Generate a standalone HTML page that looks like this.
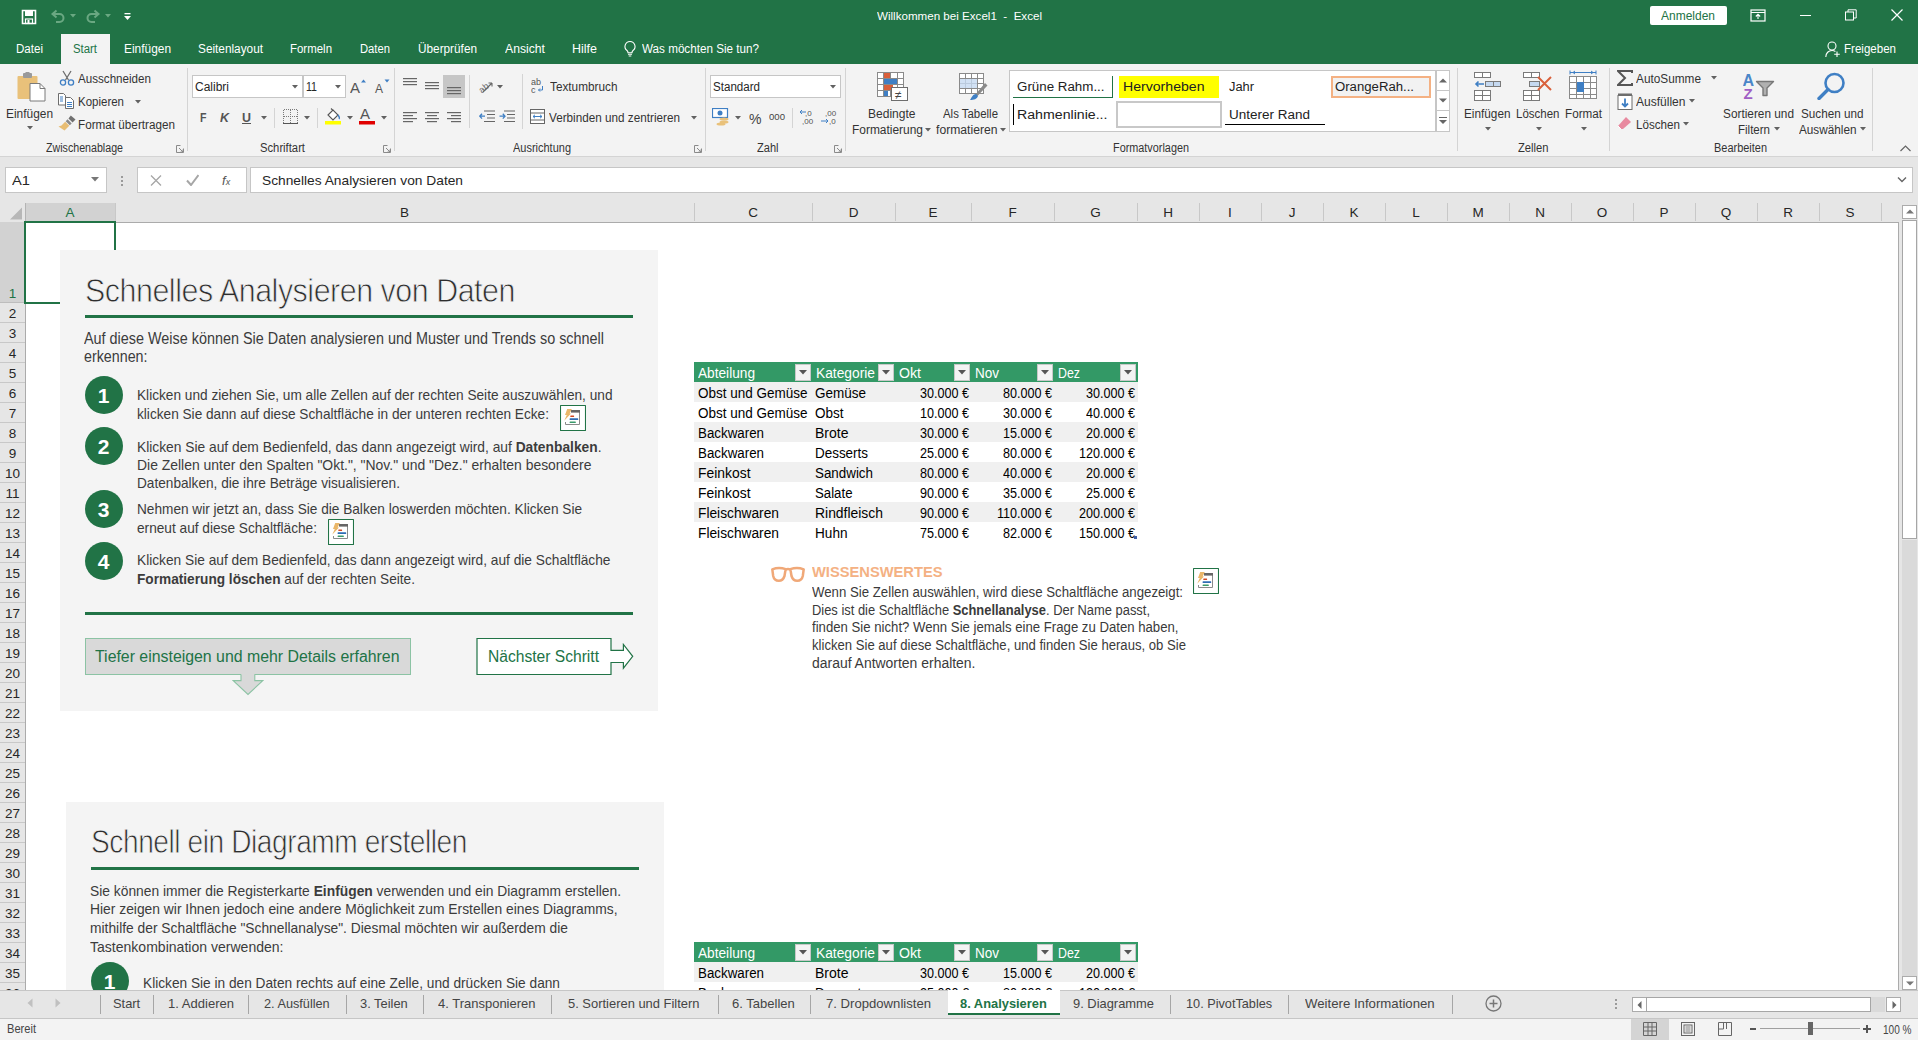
<!DOCTYPE html>
<html><head><meta charset="utf-8"><style>
html,body{margin:0;padding:0;width:1918px;height:1040px;overflow:hidden;background:#fff;font-family:"Liberation Sans", sans-serif;}
.a{position:absolute;display:block;}
.t{position:absolute;white-space:nowrap;line-height:1;transform-origin:0 0;font-family:"Liberation Sans", sans-serif;}
b{font-weight:700;}
</style></head><body>
<div class="a" style="left:0px;top:0px;width:1918px;height:64px;background:#217346;"></div><div class="a" style="left:0px;top:64px;width:1918px;height:93px;background:#f3f3f3;"></div><div class="a" style="left:0px;top:156px;width:1918px;height:1px;background:#d4d4d4;"></div><div class="a" style="left:0px;top:157px;width:1918px;height:833px;background:#e6e6e6;"></div><div class="a" style="left:61px;top:34px;width:49px;height:30px;background:#f3f3f3;"></div><div class="a" style="left:5px;top:167px;width:102px;height:26px;background:#fff;box-sizing:border-box;border:1px solid #c6c6c6;"></div><div class="a" style="left:137px;top:167px;width:110px;height:26px;background:#fff;box-sizing:border-box;border:1px solid #c6c6c6;"></div><div class="a" style="left:250px;top:167px;width:1663px;height:26px;background:#fff;box-sizing:border-box;border:1px solid #c6c6c6;"></div><div class="a" style="left:25px;top:222px;width:1874px;height:769px;background:#fff;"></div><div class="a" style="left:1898px;top:222px;width:1px;height:769px;background:#ababab;"></div><div class="a" style="left:25px;top:990px;width:1874px;height:1px;background:#ababab;"></div><div class="a" style="left:0px;top:222px;width:1899px;height:1px;background:#ababab;"></div><div class="a" style="left:25px;top:203px;width:1px;height:19px;background:#b4b4b4;"></div><div class="a" style="left:26px;top:203px;width:89px;height:18px;background:#d2d2d2;"></div><div class="a" style="left:25px;top:222px;width:1px;height:768px;background:#ababab;"></div><div class="a" style="left:0px;top:222px;width:25px;height:81px;background:#d2d2d2;"></div><svg class="a" style="left:21px;top:9px;" width="16" height="16" viewBox="0 0 16 16"><path d="M1.5 1.5h13v13h-13z" fill="none" stroke="#fff" stroke-width="1.6"/><rect x="4" y="2" width="8" height="5" fill="#fff"/><rect x="4.5" y="10" width="7" height="4.5" fill="none" stroke="#fff" stroke-width="1.2"/><rect x="6.5" y="11" width="2" height="3" fill="#fff"/></svg><svg class="a" style="left:50px;top:9px;" width="16" height="15" viewBox="0 0 16 15"><path d="M3 5h6.5a4 4 0 0 1 0 8H6" fill="none" stroke="#6aa882" stroke-width="2"/><path d="M6.5 1.5L2.5 5l4 3.5" fill="none" stroke="#6aa882" stroke-width="2"/></svg><svg class="a" style="left:70px;top:14px;" width="6" height="4" viewBox="0 0 6 4"><path d="M0 0h6L3 3.5z" fill="#6aa882"/></svg><svg class="a" style="left:85px;top:9px;" width="16" height="15" viewBox="0 0 16 15"><path d="M13 5H6.5a4 4 0 0 0 0 8H10" fill="none" stroke="#6aa882" stroke-width="2"/><path d="M9.5 1.5l4 3.5-4 3.5" fill="none" stroke="#6aa882" stroke-width="2"/></svg><svg class="a" style="left:105px;top:14px;" width="6" height="4" viewBox="0 0 6 4"><path d="M0 0h6L3 3.5z" fill="#6aa882"/></svg><svg class="a" style="left:124px;top:13px;" width="7" height="8" viewBox="0 0 7 8"><rect x="0.5" y="0" width="6" height="1.3" fill="#fff"/><path d="M0 3h7L3.5 7z" fill="#fff"/></svg><span class="t" id="t0" style="left:877px;top:10.78px;font-size:11.5px;color:#ffffff;font-weight:400;transform:scaleX(1.0085);">Willkommen bei Excel1 &nbsp;- &nbsp;Excel</span><div class="a" style="left:1650px;top:6px;width:77px;height:19px;background:#fff;border-radius:2px;"></div><span class="t" id="t1" style="left:1661px;top:10.36px;font-size:12px;color:#217346;font-weight:400;transform:scaleX(0.9991);">Anmelden</span><svg class="a" style="left:1750px;top:9px;" width="16" height="13" viewBox="0 0 16 13"><rect x="1" y="1" width="14" height="11" fill="none" stroke="#fff" stroke-width="1.2"/><path d="M1 3.5h14" stroke="#fff" stroke-width="1"/><path d="M8 10V5.5M5.8 7.5L8 5.3l2.2 2.2" fill="none" stroke="#fff" stroke-width="1.1"/></svg><div class="a" style="left:1800px;top:15px;width:11px;height:1px;background:#fff;"></div><svg class="a" style="left:1845px;top:9px;" width="12" height="12" viewBox="0 0 12 12"><rect x="0.5" y="3" width="8" height="8" fill="none" stroke="#fff"/><path d="M3 3V0.8h8.2V9H8.6" fill="none" stroke="#fff"/></svg><svg class="a" style="left:1891px;top:9px;" width="12" height="12" viewBox="0 0 12 12"><path d="M0.5 0.5l11 11M11.5 0.5l-11 11" stroke="#fff" stroke-width="1.2"/></svg><span class="t" id="t2" style="left:16px;top:43.06px;font-size:12px;color:#ffffff;font-weight:400;transform:scaleX(0.9637);">Datei</span><span class="t" id="t3" style="left:73px;top:43.06px;font-size:12px;color:#217346;font-weight:400;transform:scaleX(0.9470);">Start</span><span class="t" id="t4" style="left:124px;top:43.06px;font-size:12px;color:#ffffff;font-weight:400;transform:scaleX(0.9921);">Einfügen</span><span class="t" id="t5" style="left:198px;top:43.06px;font-size:12px;color:#ffffff;font-weight:400;transform:scaleX(0.9841);">Seitenlayout</span><span class="t" id="t6" style="left:290px;top:43.06px;font-size:12px;color:#ffffff;font-weight:400;transform:scaleX(0.9542);">Formeln</span><span class="t" id="t7" style="left:360px;top:43.06px;font-size:12px;color:#ffffff;font-weight:400;transform:scaleX(0.9366);">Daten</span><span class="t" id="t8" style="left:418px;top:43.06px;font-size:12px;color:#ffffff;font-weight:400;transform:scaleX(0.9826);">Überprüfen</span><span class="t" id="t9" style="left:505px;top:43.06px;font-size:12px;color:#ffffff;font-weight:400;transform:scaleX(1.0163);">Ansicht</span><span class="t" id="t10" style="left:572px;top:43.06px;font-size:12px;color:#ffffff;font-weight:400;transform:scaleX(1.0410);">Hilfe</span><svg class="a" style="left:623px;top:40px;" width="14" height="17" viewBox="0 0 14 17"><path d="M7 1.5a5 5 0 0 0-3 9c.7.6 1 1.3 1 2.2h4c0-.9.3-1.6 1-2.2a5 5 0 0 0-3-9z" fill="none" stroke="#fff" stroke-width="1.1"/><path d="M5 14.3h4M5.7 16h2.6" stroke="#fff" stroke-width="1.1"/></svg><span class="t" id="t11" style="left:642px;top:43.06px;font-size:12px;color:#ffffff;font-weight:400;transform:scaleX(0.9727);">Was möchten Sie tun?</span><svg class="a" style="left:1825px;top:41px;" width="16" height="17" viewBox="0 0 16 17"><circle cx="7" cy="5" r="4" fill="none" stroke="#fff" stroke-width="1.1"/><path d="M0.8 16c0-4 2.8-6.5 6.2-6.5 1.3 0 2.5.4 3.4 1" fill="none" stroke="#fff" stroke-width="1.1"/><path d="M12 10.5v5.5M9.2 13.2h5.6" stroke="#fff" stroke-width="1.1"/></svg><span class="t" id="t12" style="left:1844px;top:43.06px;font-size:12px;color:#ffffff;font-weight:400;transform:scaleX(0.9621);">Freigeben</span><svg class="a" style="left:16px;top:72px;" width="32" height="30" viewBox="0 0 32 30"><rect x="1.5" y="4" width="20" height="23" rx="1" fill="#e9c17a"/><rect x="7" y="1" width="9" height="5" rx="1" fill="#9a9a9a"/><rect x="9.5" y="0" width="4" height="2" fill="#9a9a9a"/><path d="M14 11.5h10l5 5v12.5H14z" fill="#fff" stroke="#7a7a7a" stroke-width="1"/><path d="M24 11.5v5h5" fill="none" stroke="#7a7a7a" stroke-width="1"/></svg><span class="t" id="t13" style="left:6px;top:108.36px;font-size:12px;color:#333333;font-weight:400;transform:scaleX(0.9921);">Einfügen</span><svg class="a" style="left:27px;top:126px;" width="6" height="4" viewBox="0 0 6 4"><path d="M0 0h6L3 3.5z" fill="#616161"/></svg><svg class="a" style="left:59px;top:70px;" width="16" height="16" viewBox="0 0 16 16"><path d="M4 1l5.5 9M12 1L6.5 10" stroke="#6d6d6d" stroke-width="1.3" fill="none"/><circle cx="4" cy="12.5" r="2.6" fill="none" stroke="#3f7fc4" stroke-width="1.3"/><circle cx="12" cy="12.5" r="2.6" fill="none" stroke="#3f7fc4" stroke-width="1.3"/></svg><span class="t" id="t14" style="left:78px;top:73.36px;font-size:12px;color:#333333;font-weight:400;transform:scaleX(0.9683);">Ausschneiden</span><svg class="a" style="left:58px;top:93px;" width="17" height="16" viewBox="0 0 17 16"><path d="M0.5 0.5h5l2 2v9.5h-7z" fill="#fff" stroke="#6d6d6d"/><path d="M7.5 4.5h5l3 3v8h-8z" fill="#fff" stroke="#6d6d6d"/><path d="M9 9.5h5M9 11.5h5M9 13.5h5M2 4h3M2 6h3M2 8h3" stroke="#3f7fc4" stroke-width="1"/></svg><span class="t" id="t15" style="left:78px;top:96.36px;font-size:12px;color:#333333;font-weight:400;transform:scaleX(0.9574);">Kopieren</span><svg class="a" style="left:135px;top:100px;" width="6" height="4" viewBox="0 0 6 4"><path d="M0 0h6L3 3.5z" fill="#616161"/></svg><svg class="a" style="left:58px;top:115px;" width="18" height="16" viewBox="0 0 18 16"><path d="M12.8 0.5L17.5 4.6 14.6 7.5 10.5 3.4Z" fill="#707070"/><path d="M9.6 4.3L13.7 8.4 11.8 10.3 7.7 6.2Z" fill="#8a8a8a"/><path d="M7.2 6.7L11.3 10.8 6.5 15.5 0.5 11.5 3.5 10.5Z" fill="#e8bd73"/></svg><span class="t" id="t16" style="left:78px;top:119.36px;font-size:12px;color:#333333;font-weight:400;transform:scaleX(0.9759);">Format übertragen</span><span class="t" id="t17" style="left:46px;top:141.86px;font-size:12px;color:#333333;font-weight:400;transform:scaleX(0.8879);">Zwischenablage</span><svg class="a" style="left:176px;top:145px;" width="8" height="8" viewBox="0 0 8 8"><path d="M0.5 0.5h4M0.5 0.5v7h7v-4" fill="none" stroke="#8a8a8a" stroke-width="1"/><path d="M3 3l4 4M7 4.5V7H4.5" fill="none" stroke="#8a8a8a" stroke-width="1"/></svg><div class="a" style="left:187px;top:68px;width:1px;height:83px;background:#d4d4d4;"></div><div class="a" style="left:192px;top:75px;width:111px;height:23px;background:#fff;box-sizing:border-box;border:1px solid #c6c6c6;"></div><span class="t" id="t18" style="left:195px;top:81.36px;font-size:12px;color:#262626;font-weight:400;transform:scaleX(0.9995);">Calibri</span><svg class="a" style="left:292px;top:85px;" width="6" height="4" viewBox="0 0 6 4"><path d="M0 0h6L3 3.5z" fill="#616161"/></svg><div class="a" style="left:303px;top:75px;width:43px;height:23px;background:#fff;box-sizing:border-box;border:1px solid #c6c6c6;"></div><span class="t" id="t19" style="left:306px;top:81.36px;font-size:12px;color:#262626;font-weight:400;transform:scaleX(0.8822);">11</span><svg class="a" style="left:335px;top:85px;" width="6" height="4" viewBox="0 0 6 4"><path d="M0 0h6L3 3.5z" fill="#616161"/></svg><svg class="a" style="left:350px;top:78px;" width="16" height="16" viewBox="0 0 16 16"><text x="0" y="15" font-family="Liberation Sans" font-size="15" fill="#555">A</text><path d="M11 4.5l2.5-3 2.5 3z" fill="#3f7fc4"/></svg><svg class="a" style="left:374px;top:78px;" width="16" height="16" viewBox="0 0 16 16"><text x="1" y="15" font-family="Liberation Sans" font-size="12" fill="#555">A</text><path d="M10.5 1.5h5l-2.5 3z" fill="#3f7fc4"/></svg><span class="t" id="t20" style="left:200px;top:110.52px;font-size:13px;color:#555;font-weight:700;transform:scaleX(0.8173);">F</span><span class="t" id="t21" style="left:220px;top:110.52px;font-size:13px;color:#555;font-weight:700;font-style:italic;transform:scaleX(0.9584);">K</span><span class="t" id="t22" style="left:242px;top:110.52px;font-size:13px;color:#555;font-weight:700;transform:scaleX(0.9584);">U</span><div class="a" style="left:242px;top:123px;width:9px;height:1px;background:#555;"></div><svg class="a" style="left:261px;top:116px;" width="6" height="4" viewBox="0 0 6 4"><path d="M0 0h6L3 3.5z" fill="#616161"/></svg><div class="a" style="left:274px;top:108px;width:1px;height:20px;background:#d4d4d4;"></div><svg class="a" style="left:283px;top:109px;" width="15" height="15" viewBox="0 0 15 15"><path d="M0.5 0.5h14v14M0.5 0.5v14M7.5 0.5v14M0.5 7.5h14" fill="none" stroke="#7a7a7a" stroke-width="1" stroke-dasharray="1 1" shape-rendering="crispEdges"/><path d="M0 14.5h15" stroke="#555" stroke-width="1" shape-rendering="crispEdges"/></svg><svg class="a" style="left:304px;top:116px;" width="6" height="4" viewBox="0 0 6 4"><path d="M0 0h6L3 3.5z" fill="#616161"/></svg><div class="a" style="left:317px;top:108px;width:1px;height:20px;background:#d4d4d4;"></div><svg class="a" style="left:325px;top:107px;" width="17" height="18" viewBox="0 0 17 18"><path d="M3 8l5-5 5 5-5 5z" fill="#fff" stroke="#555" stroke-width="1.1"/><path d="M6 1.5l2 2" stroke="#555" stroke-width="1.1"/><path d="M13 8c1.5 2 2 3 1 4" fill="none" stroke="#3f7fc4" stroke-width="1.3"/><rect x="0" y="14" width="16" height="3.5" fill="#ffff00"/></svg><svg class="a" style="left:347px;top:116px;" width="6" height="4" viewBox="0 0 6 4"><path d="M0 0h6L3 3.5z" fill="#616161"/></svg><svg class="a" style="left:359px;top:106px;" width="16" height="19" viewBox="0 0 16 19"><text x="1" y="13" font-family="Liberation Sans" font-size="15" fill="#555">A</text><rect x="0" y="15" width="16" height="3.5" fill="#e00000"/></svg><svg class="a" style="left:381px;top:116px;" width="6" height="4" viewBox="0 0 6 4"><path d="M0 0h6L3 3.5z" fill="#616161"/></svg><span class="t" id="t23" style="left:260px;top:141.86px;font-size:12px;color:#333333;font-weight:400;transform:scaleX(0.9372);">Schriftart</span><svg class="a" style="left:383px;top:145px;" width="8" height="8" viewBox="0 0 8 8"><path d="M0.5 0.5h4M0.5 0.5v7h7v-4" fill="none" stroke="#8a8a8a" stroke-width="1"/><path d="M3 3l4 4M7 4.5V7H4.5" fill="none" stroke="#8a8a8a" stroke-width="1"/></svg><div class="a" style="left:394px;top:68px;width:1px;height:83px;background:#d4d4d4;"></div><svg class="a" style="left:403px;top:77px;" width="14" height="16" viewBox="0 0 14 16"><rect x="0" y="1" width="14" height="1.2" fill="#666"/><rect x="0" y="4" width="14" height="1.2" fill="#666"/><rect x="0" y="7" width="14" height="1.2" fill="#666"/></svg><svg class="a" style="left:425px;top:81px;" width="14" height="16" viewBox="0 0 14 16"><rect x="0" y="1" width="14" height="1.2" fill="#666"/><rect x="0" y="4" width="14" height="1.2" fill="#666"/><rect x="0" y="7" width="14" height="1.2" fill="#666"/></svg><div class="a" style="left:443px;top:75px;width:22px;height:23px;background:#c6c6c6;"></div><svg class="a" style="left:447px;top:86px;" width="14" height="16" viewBox="0 0 14 16"><rect x="0" y="1" width="14" height="1.2" fill="#666"/><rect x="0" y="4" width="14" height="1.2" fill="#666"/><rect x="0" y="7" width="14" height="1.2" fill="#666"/></svg><div class="a" style="left:469px;top:75px;width:1px;height:53px;background:#d4d4d4;"></div><svg class="a" style="left:403px;top:111px;" width="14" height="16" viewBox="0 0 14 16"><rect x="0" y="1" width="14" height="1.2" fill="#666"/><rect x="0" y="4" width="10" height="1.2" fill="#666"/><rect x="0" y="7" width="14" height="1.2" fill="#666"/><rect x="0" y="10" width="10" height="1.2" fill="#666"/></svg><svg class="a" style="left:425px;top:111px;" width="14" height="16" viewBox="0 0 14 16"><rect x="0" y="1" width="14" height="1.2" fill="#666"/><rect x="2" y="4" width="10" height="1.2" fill="#666"/><rect x="0" y="7" width="14" height="1.2" fill="#666"/><rect x="2" y="10" width="10" height="1.2" fill="#666"/></svg><svg class="a" style="left:447px;top:111px;" width="14" height="16" viewBox="0 0 14 16"><rect x="0" y="1" width="14" height="1.2" fill="#666"/><rect x="4" y="4" width="10" height="1.2" fill="#666"/><rect x="0" y="7" width="14" height="1.2" fill="#666"/><rect x="4" y="10" width="10" height="1.2" fill="#666"/></svg><svg class="a" style="left:478px;top:78px;" width="17" height="16" viewBox="0 0 17 16"><text x="0" y="11" font-family="Liberation Sans" font-size="9" fill="#666" transform="rotate(-40 8 8)">ab</text><path d="M5 14l9-9M14 5h-3.5M14 5v3.5" fill="none" stroke="#666" stroke-width="1.1"/></svg><svg class="a" style="left:497px;top:85px;" width="6" height="4" viewBox="0 0 6 4"><path d="M0 0h6L3 3.5z" fill="#616161"/></svg><svg class="a" style="left:479px;top:110px;" width="16" height="14" viewBox="0 0 16 14"><path d="M5 1h11M8 4.5h8M8 8h8M5 11.5h11" stroke="#666" stroke-width="1.2"/><path d="M6 6.2H0.8M3 3.8L0.8 6.2 3 8.6" fill="none" stroke="#3f7fc4" stroke-width="1.3"/></svg><svg class="a" style="left:499px;top:110px;" width="16" height="14" viewBox="0 0 16 14"><path d="M5 1h11M8 4.5h8M8 8h8M5 11.5h11" stroke="#666" stroke-width="1.2"/><path d="M0.5 6.2H6M3.8 3.8L6 6.2 3.8 8.6" fill="none" stroke="#3f7fc4" stroke-width="1.3"/></svg><div class="a" style="left:522px;top:74px;width:1px;height:55px;background:#d4d4d4;"></div><svg class="a" style="left:531px;top:77px;" width="14" height="17" viewBox="0 0 14 17"><text x="0" y="8" font-family="Liberation Sans" font-size="9" fill="#555">ab</text><text x="0" y="16" font-family="Liberation Sans" font-size="9" fill="#555">c</text><path d="M11.5 9v4H7.5M9 11.5l-1.5 1.5 1.5 1.5" fill="none" stroke="#3f7fc4" stroke-width="1"/></svg><span class="t" id="t24" style="left:549.5px;top:81.36px;font-size:12px;color:#333333;font-weight:400;transform:scaleX(0.9825);">Textumbruch</span><svg class="a" style="left:530px;top:109px;" width="15" height="15" viewBox="0 0 15 15"><rect x="0.5" y="0.5" width="14" height="14" fill="#fff" stroke="#666"/><path d="M0.5 4h14M0.5 11h14" stroke="#666"/><path d="M3 7.5h9M5 5.8L3 7.5l2 1.7M10 5.8l2 1.7-2 1.7" fill="none" stroke="#3f7fc4" stroke-width="1"/></svg><span class="t" id="t25" style="left:549px;top:111.86px;font-size:12px;color:#333333;font-weight:400;transform:scaleX(0.9768);">Verbinden und zentrieren</span><svg class="a" style="left:691px;top:116px;" width="6" height="4" viewBox="0 0 6 4"><path d="M0 0h6L3 3.5z" fill="#616161"/></svg><span class="t" id="t26" style="left:513px;top:141.86px;font-size:12px;color:#333333;font-weight:400;transform:scaleX(0.9152);">Ausrichtung</span><svg class="a" style="left:694px;top:145px;" width="8" height="8" viewBox="0 0 8 8"><path d="M0.5 0.5h4M0.5 0.5v7h7v-4" fill="none" stroke="#8a8a8a" stroke-width="1"/><path d="M3 3l4 4M7 4.5V7H4.5" fill="none" stroke="#8a8a8a" stroke-width="1"/></svg><div class="a" style="left:705px;top:68px;width:1px;height:83px;background:#d4d4d4;"></div><div class="a" style="left:710px;top:75px;width:131px;height:23px;background:#fff;box-sizing:border-box;border:1px solid #c6c6c6;"></div><span class="t" id="t27" style="left:713px;top:81.36px;font-size:12px;color:#262626;font-weight:400;transform:scaleX(0.9650);">Standard</span><svg class="a" style="left:830px;top:85px;" width="6" height="4" viewBox="0 0 6 4"><path d="M0 0h6L3 3.5z" fill="#616161"/></svg><svg class="a" style="left:712px;top:108px;" width="19" height="18" viewBox="0 0 19 18"><rect x="0.5" y="0.5" width="15" height="9" fill="#fff" stroke="#3f7fc4" stroke-width="1.2"/><circle cx="8" cy="5" r="2.5" fill="#3f7fc4"/><ellipse cx="12" cy="11" rx="4.5" ry="1.6" fill="#e9c17a"/><ellipse cx="12" cy="14" rx="4.5" ry="1.6" fill="#e9c17a"/><ellipse cx="9" cy="16" rx="4.5" ry="1.6" fill="#e9c17a"/></svg><svg class="a" style="left:735px;top:116px;" width="6" height="4" viewBox="0 0 6 4"><path d="M0 0h6L3 3.5z" fill="#616161"/></svg><span class="t" id="t28" style="left:749px;top:110.83px;font-size:15px;color:#444;font-weight:400;transform:scaleX(0.9368);">%</span><span class="t" id="t29" style="left:769px;top:111.97px;font-size:9.5px;color:#444;font-weight:400;transform:scaleX(1.0089);">000</span><div class="a" style="left:792px;top:108px;width:1px;height:20px;background:#d4d4d4;"></div><svg class="a" style="left:799px;top:108px;" width="17" height="17" viewBox="0 0 17 17"><text x="6" y="7.5" font-family="Liberation Sans" font-size="8" fill="#555">,0</text><text x="3" y="16" font-family="Liberation Sans" font-size="8" fill="#555">,00</text><path d="M7 4H1M3 2L1 4l2 2" fill="none" stroke="#3f7fc4" stroke-width="1"/></svg><svg class="a" style="left:821px;top:108px;" width="17" height="17" viewBox="0 0 17 17"><text x="4" y="7.5" font-family="Liberation Sans" font-size="8" fill="#555">,00</text><text x="8" y="16" font-family="Liberation Sans" font-size="8" fill="#555">,0</text><path d="M0 13h7M5 11l2 2-2 2" fill="none" stroke="#3f7fc4" stroke-width="1"/></svg><span class="t" id="t30" style="left:756.5px;top:141.86px;font-size:12px;color:#333333;font-weight:400;transform:scaleX(0.9210);">Zahl</span><svg class="a" style="left:834px;top:145px;" width="8" height="8" viewBox="0 0 8 8"><path d="M0.5 0.5h4M0.5 0.5v7h7v-4" fill="none" stroke="#8a8a8a" stroke-width="1"/><path d="M3 3l4 4M7 4.5V7H4.5" fill="none" stroke="#8a8a8a" stroke-width="1"/></svg><div class="a" style="left:845px;top:68px;width:1px;height:83px;background:#d4d4d4;"></div><svg class="a" style="left:877px;top:72px;" width="32" height="30" viewBox="0 0 32 30"><g fill="#fff" stroke="#8a8a8a" stroke-width="1"><rect x="0.5" y="0.5" width="26" height="24"/></g><path d="M0.5 6.5h26M0.5 12.5h26M0.5 18.5h26M6.5 0.5v24M13.5 0.5v24M20.5 0.5v24" stroke="#8a8a8a"/><rect x="7" y="1" width="6" height="5" fill="#d9603b"/><rect x="7" y="7" width="13" height="5" fill="#3f7fc4"/><rect x="7" y="13" width="9" height="5" fill="#d9603b"/><rect x="7" y="19" width="4" height="5" fill="#3f7fc4"/><rect x="14.5" y="15.5" width="16" height="13" fill="#fff" stroke="#6d6d6d"/><text x="18" y="27" font-family="Liberation Sans" font-size="12" fill="#444">≠</text></svg><span class="t" id="t31" style="left:868px;top:108.36px;font-size:12px;color:#333333;font-weight:400;transform:scaleX(1.0026);">Bedingte</span><span class="t" id="t32" style="left:852px;top:124.36px;font-size:12px;color:#333333;font-weight:400;transform:scaleX(0.9947);">Formatierung</span><svg class="a" style="left:925px;top:128px;" width="6" height="4" viewBox="0 0 6 4"><path d="M0 0h6L3 3.5z" fill="#616161"/></svg><svg class="a" style="left:959px;top:73px;" width="30" height="29" viewBox="0 0 30 29"><rect x="0.5" y="0.5" width="24" height="20" fill="#fff" stroke="#8a8a8a"/><path d="M0.5 5.5h24M0.5 10.5h24M0.5 15.5h24M6.5 0.5v20M12.5 0.5v20M18.5 0.5v20" stroke="#8a8a8a"/><rect x="1" y="6" width="17" height="9" fill="#c5d9f1" opacity="0.8"/><path d="M16 22l10-12 2.5 2.5-10 10.5z" fill="#8a8a8a"/><path d="M11 27c2-3 3-6 6-6l2 2c-1 3-4 4-8 4z" fill="#3f7fc4"/></svg><span class="t" id="t33" style="left:943px;top:108.36px;font-size:12px;color:#333333;font-weight:400;transform:scaleX(0.9511);">Als Tabelle</span><span class="t" id="t34" style="left:936px;top:124.36px;font-size:12px;color:#333333;font-weight:400;transform:scaleX(1.0131);">formatieren</span><svg class="a" style="left:1000px;top:128px;" width="6" height="4" viewBox="0 0 6 4"><path d="M0 0h6L3 3.5z" fill="#616161"/></svg><div class="a" style="left:1009px;top:70px;width:427px;height:62px;background:#fff;box-sizing:border-box;border:1px solid #c6c6c6;"></div><span class="t" id="t35" style="left:1017px;top:80.86px;font-size:12px;color:#222;font-weight:400;transform:scaleX(1.1118);">Grüne Rahm...</span><div class="a" style="left:1013px;top:97px;width:100px;height:1px;background:#217346;"></div><div class="a" style="left:1112px;top:76px;width:1px;height:22px;background:#217346;"></div><div class="a" style="left:1119px;top:76px;width:100px;height:22px;background:#ffff00;"></div><span class="t" id="t36" style="left:1123px;top:80.86px;font-size:12px;color:#222;font-weight:400;transform:scaleX(1.1748);">Hervorheben</span><span class="t" id="t37" style="left:1229px;top:80.86px;font-size:12px;color:#222;font-weight:400;transform:scaleX(1.0710);">Jahr</span><div class="a" style="left:1331px;top:76px;width:100px;height:22px;background:#f2f2f2;box-sizing:border-box;border:2px solid #f4b183;"></div><span class="t" id="t38" style="left:1335px;top:80.86px;font-size:12px;color:#222;font-weight:400;transform:scaleX(1.0965);">OrangeRah...</span><div class="a" style="left:1013px;top:104px;width:1px;height:21px;background:#000;"></div><span class="t" id="t39" style="left:1017px;top:108.86px;font-size:12px;color:#222;font-weight:400;transform:scaleX(1.1796);">Rahmenlinie...</span><div class="a" style="left:1116px;top:101px;width:106px;height:27px;background:#fff;box-sizing:border-box;border:2px solid #c8c8c8;"></div><span class="t" id="t40" style="left:1229px;top:108.86px;font-size:12px;color:#222;font-weight:400;transform:scaleX(1.1243);">Unterer Rand</span><div class="a" style="left:1225px;top:124px;width:100px;height:1px;background:#000;"></div><div class="a" style="left:1436px;top:70px;width:14px;height:62px;background:#fff;box-sizing:border-box;border:1px solid #c6c6c6;"></div><div class="a" style="left:1436px;top:90px;width:14px;height:1px;background:#c6c6c6;"></div><div class="a" style="left:1436px;top:110px;width:14px;height:1px;background:#c6c6c6;"></div><svg class="a" style="left:1439px;top:78px;" width="8" height="5" viewBox="0 0 8 5"><path d="M0 4.5L4 0.5l4 4z" fill="#666"/></svg><svg class="a" style="left:1439px;top:98px;" width="8" height="5" viewBox="0 0 8 5"><path d="M0 0.5h8L4 4.5z" fill="#666"/></svg><svg class="a" style="left:1439px;top:117px;" width="8" height="8" viewBox="0 0 8 8"><rect x="0" y="0" width="8" height="1" fill="#666"/><path d="M0 3h8L4 7z" fill="#666"/></svg><span class="t" id="t41" style="left:1113px;top:141.86px;font-size:12px;color:#333333;font-weight:400;transform:scaleX(0.9043);">Formatvorlagen</span><div class="a" style="left:1457px;top:68px;width:1px;height:83px;background:#d4d4d4;"></div><svg class="a" style="left:1474px;top:72px;" width="28" height="29" viewBox="0 0 28 29"><g fill="#fff" stroke="#7a7a7a"><rect x="0.5" y="0.5" width="8" height="5"/><rect x="8.5" y="0.5" width="8" height="5"/><rect x="0.5" y="18.5" width="8" height="5"/><rect x="8.5" y="18.5" width="8" height="5"/><rect x="0.5" y="23.5" width="8" height="5"/><rect x="8.5" y="23.5" width="8" height="5"/></g><g fill="#c5d9f1" stroke="#7a7a7a"><rect x="11.5" y="9.5" width="8" height="5"/><rect x="19.5" y="9.5" width="7" height="5"/></g><path d="M10 12H2M4.5 9.5L2 12l2.5 2.5" fill="none" stroke="#3f7fc4" stroke-width="1.6"/></svg><span class="t" id="t42" style="left:1464px;top:108.36px;font-size:12px;color:#333333;font-weight:400;transform:scaleX(0.9815);">Einfügen</span><svg class="a" style="left:1485px;top:127px;" width="6" height="4" viewBox="0 0 6 4"><path d="M0 0h6L3 3.5z" fill="#616161"/></svg><svg class="a" style="left:1523px;top:72px;" width="31" height="29" viewBox="0 0 31 29"><g fill="#fff" stroke="#7a7a7a"><rect x="0.5" y="0.5" width="8" height="5"/><rect x="8.5" y="0.5" width="8" height="5"/><rect x="0.5" y="18.5" width="8" height="5"/><rect x="8.5" y="18.5" width="8" height="5"/><rect x="0.5" y="23.5" width="8" height="5"/><rect x="8.5" y="23.5" width="8" height="5"/></g><rect x="6.5" y="9.5" width="10" height="5" fill="#c5d9f1" stroke="#7a7a7a"/><path d="M15 5l13 13M28 5L15 18" stroke="#d9603b" stroke-width="2"/></svg><span class="t" id="t43" style="left:1516px;top:108.36px;font-size:12px;color:#333333;font-weight:400;transform:scaleX(0.9587);">Löschen</span><svg class="a" style="left:1536px;top:127px;" width="6" height="4" viewBox="0 0 6 4"><path d="M0 0h6L3 3.5z" fill="#616161"/></svg><svg class="a" style="left:1569px;top:70px;" width="29" height="32" viewBox="0 0 29 32"><path d="M1 2.5h26M1 0.5v4M27 0.5v4M4 2.5l2-1.5M4 2.5l2 1.5M24 2.5l-2-1.5M24 2.5l-2 1.5" fill="none" stroke="#3f7fc4" stroke-width="1"/><rect x="0.5" y="6.5" width="27" height="22" fill="#fff" stroke="#8a8a8a"/><path d="M0.5 12.5h27M0.5 18.5h27M0.5 24.5h27M7.5 6.5v22M14.5 6.5v22M21.5 6.5v22" stroke="#8a8a8a"/><rect x="8" y="12" width="7" height="10" fill="#3f7fc4"/></svg><span class="t" id="t44" style="left:1565px;top:108.36px;font-size:12px;color:#333333;font-weight:400;transform:scaleX(0.9733);">Format</span><svg class="a" style="left:1581px;top:127px;" width="6" height="4" viewBox="0 0 6 4"><path d="M0 0h6L3 3.5z" fill="#616161"/></svg><span class="t" id="t45" style="left:1518px;top:141.86px;font-size:12px;color:#333333;font-weight:400;transform:scaleX(0.9331);">Zellen</span><div class="a" style="left:1609px;top:68px;width:1px;height:83px;background:#d4d4d4;"></div><svg class="a" style="left:1617px;top:70px;" width="16" height="16" viewBox="0 0 16 16"><path d="M15 3V1H1l7 7-7 7h14v-2" fill="none" stroke="#555" stroke-width="2"/></svg><span class="t" id="t46" style="left:1636px;top:73.36px;font-size:12px;color:#333333;font-weight:400;transform:scaleX(0.9844);">AutoSumme</span><svg class="a" style="left:1711px;top:76px;" width="6" height="4" viewBox="0 0 6 4"><path d="M0 0h6L3 3.5z" fill="#616161"/></svg><svg class="a" style="left:1617px;top:93px;" width="16" height="17" viewBox="0 0 16 17"><rect x="1" y="2.5" width="14" height="14" fill="#fff" stroke="#6d6d6d"/><rect x="1" y="0.5" width="14" height="2.5" fill="#6d6d6d"/><path d="M8 5.5v8M5 10.5l3 3 3-3" fill="none" stroke="#3f7fc4" stroke-width="1.8"/></svg><span class="t" id="t47" style="left:1636px;top:96.36px;font-size:12px;color:#333333;font-weight:400;transform:scaleX(1.0025);">Ausfüllen</span><svg class="a" style="left:1689px;top:99px;" width="6" height="4" viewBox="0 0 6 4"><path d="M0 0h6L3 3.5z" fill="#616161"/></svg><svg class="a" style="left:1617px;top:116px;" width="15" height="14" viewBox="0 0 15 14"><path d="M1 10l8-9 5 5-8 7H4z" fill="#e88aa0"/><path d="M1 10l3 3" stroke="#fff" stroke-width="1"/></svg><span class="t" id="t48" style="left:1636px;top:119.36px;font-size:12px;color:#333333;font-weight:400;transform:scaleX(0.9697);">Löschen</span><svg class="a" style="left:1683px;top:122px;" width="6" height="4" viewBox="0 0 6 4"><path d="M0 0h6L3 3.5z" fill="#616161"/></svg><svg class="a" style="left:1743px;top:72px;" width="32" height="28" viewBox="0 0 32 28"><text x="-0.5" y="13.5" font-family="Liberation Sans" font-size="16" font-weight="700" fill="#4a86c8">A</text><text x="0.5" y="27" font-family="Liberation Sans" font-size="15" font-weight="700" fill="#a05ec4">Z</text><path d="M13.5 9.5h17l-6.5 6.5v7.5h-4V16z" fill="#b0b0b0" stroke="#777" stroke-width="1.4" stroke-linejoin="round"/></svg><span class="t" id="t49" style="left:1723px;top:108.36px;font-size:12px;color:#333333;font-weight:400;transform:scaleX(0.9855);">Sortieren und</span><span class="t" id="t50" style="left:1738px;top:124.36px;font-size:12px;color:#333333;font-weight:400;transform:scaleX(0.9597);">Filtern</span><svg class="a" style="left:1774px;top:127px;" width="6" height="4" viewBox="0 0 6 4"><path d="M0 0h6L3 3.5z" fill="#616161"/></svg><svg class="a" style="left:1817px;top:72px;" width="29" height="28" viewBox="0 0 29 28"><circle cx="17.5" cy="11" r="9" fill="none" stroke="#3f7fc4" stroke-width="2.6"/><path d="M11 17.5L2 26.5" stroke="#3f7fc4" stroke-width="3.4" stroke-linecap="round"/></svg><span class="t" id="t51" style="left:1801px;top:108.36px;font-size:12px;color:#333333;font-weight:400;transform:scaleX(0.9756);">Suchen und</span><span class="t" id="t52" style="left:1799px;top:124.36px;font-size:12px;color:#333333;font-weight:400;transform:scaleX(0.9792);">Auswählen</span><svg class="a" style="left:1860px;top:127px;" width="6" height="4" viewBox="0 0 6 4"><path d="M0 0h6L3 3.5z" fill="#616161"/></svg><span class="t" id="t53" style="left:1714px;top:141.86px;font-size:12px;color:#333333;font-weight:400;transform:scaleX(0.9131);">Bearbeiten</span><div class="a" style="left:1872px;top:68px;width:1px;height:83px;background:#d4d4d4;"></div><svg class="a" style="left:1900px;top:145px;" width="11" height="7" viewBox="0 0 11 7"><path d="M0.5 6L5.5 1l5 5" fill="none" stroke="#666" stroke-width="1.2"/></svg><span class="t" id="t54" style="left:12px;top:174.01px;font-size:13px;color:#262626;font-weight:400;transform:scaleX(1.1316);">A1</span><svg class="a" style="left:91px;top:177px;" width="8" height="5" viewBox="0 0 8 5"><path d="M0 0h8L4 4.5z" fill="#777"/></svg><div class="a" style="left:121px;top:176px;width:2px;height:2px;background:#9a9a9a;"></div><div class="a" style="left:121px;top:180px;width:2px;height:2px;background:#9a9a9a;"></div><div class="a" style="left:121px;top:184px;width:2px;height:2px;background:#9a9a9a;"></div><svg class="a" style="left:150px;top:175px;" width="12" height="11" viewBox="0 0 12 11"><path d="M1 0.5l10 10M11 0.5l-10 10" stroke="#a6a6a6" stroke-width="1.3"/></svg><svg class="a" style="left:186px;top:174px;" width="13" height="12" viewBox="0 0 13 12"><path d="M1 6.5l4 4.5 7.5-10" fill="none" stroke="#a6a6a6" stroke-width="2"/></svg><span class="t" id="t55" style="left:222px;top:174.01px;font-size:13px;color:#555;font-weight:400;font-family:"Liberation Serif";font-weight:700;transform:scaleX(1.4154);"><i>f</i><span style="font-size:9px;font-style:italic">x</span></span><span class="t" id="t56" style="left:262px;top:174.09px;font-size:13.5px;color:#262626;font-weight:400;transform:scaleX(1.0184);">Schnelles Analysieren von Daten</span><svg class="a" style="left:1897px;top:177px;" width="10" height="6" viewBox="0 0 10 6"><path d="M1 0.5l4 4 4-4" fill="none" stroke="#666" stroke-width="1.4"/></svg><svg class="a" style="left:10px;top:207px;" width="13" height="13" viewBox="0 0 13 13"><path d="M12 0.5V12.5H0z" fill="#b7b7b7"/></svg><span class="t" id="t57" style="left:65.4921875px;top:206.09px;font-size:13.5px;color:#217346;font-weight:400;">A</span><span class="t" id="t58" style="left:399.9921875px;top:206.09px;font-size:13.5px;color:#262626;font-weight:400;">B</span><span class="t" id="t59" style="left:748.125px;top:206.09px;font-size:13.5px;color:#262626;font-weight:400;">C</span><span class="t" id="t60" style="left:848.625px;top:206.09px;font-size:13.5px;color:#262626;font-weight:400;">D</span><span class="t" id="t61" style="left:928.4921875px;top:206.09px;font-size:13.5px;color:#262626;font-weight:400;">E</span><span class="t" id="t62" style="left:1008.375px;top:206.09px;font-size:13.5px;color:#262626;font-weight:400;">F</span><span class="t" id="t63" style="left:1090.2421875px;top:206.09px;font-size:13.5px;color:#262626;font-weight:400;">G</span><span class="t" id="t64" style="left:1163.125px;top:206.09px;font-size:13.5px;color:#262626;font-weight:400;">H</span><span class="t" id="t65" style="left:1228.1171875px;top:206.09px;font-size:13.5px;color:#262626;font-weight:400;">I</span><span class="t" id="t66" style="left:1288.625px;top:206.09px;font-size:13.5px;color:#262626;font-weight:400;">J</span><span class="t" id="t67" style="left:1349.4921875px;top:206.09px;font-size:13.5px;color:#262626;font-weight:400;">K</span><span class="t" id="t68" style="left:1412.2421875px;top:206.09px;font-size:13.5px;color:#262626;font-weight:400;">L</span><span class="t" id="t69" style="left:1472.375px;top:206.09px;font-size:13.5px;color:#262626;font-weight:400;">M</span><span class="t" id="t70" style="left:1535.125px;top:206.09px;font-size:13.5px;color:#262626;font-weight:400;">N</span><span class="t" id="t71" style="left:1596.7421875px;top:206.09px;font-size:13.5px;color:#262626;font-weight:400;">O</span><span class="t" id="t72" style="left:1659.4921875px;top:206.09px;font-size:13.5px;color:#262626;font-weight:400;">P</span><span class="t" id="t73" style="left:1720.7421875px;top:206.09px;font-size:13.5px;color:#262626;font-weight:400;">Q</span><span class="t" id="t74" style="left:1783.125px;top:206.09px;font-size:13.5px;color:#262626;font-weight:400;">R</span><span class="t" id="t75" style="left:1845.4921875px;top:206.09px;font-size:13.5px;color:#262626;font-weight:400;">S</span><div class="a" style="left:115px;top:203px;width:1px;height:18px;background:#c8c8c8;"></div><div class="a" style="left:694px;top:203px;width:1px;height:18px;background:#c8c8c8;"></div><div class="a" style="left:812px;top:203px;width:1px;height:18px;background:#c8c8c8;"></div><div class="a" style="left:895px;top:203px;width:1px;height:18px;background:#c8c8c8;"></div><div class="a" style="left:971px;top:203px;width:1px;height:18px;background:#c8c8c8;"></div><div class="a" style="left:1054px;top:203px;width:1px;height:18px;background:#c8c8c8;"></div><div class="a" style="left:1137px;top:203px;width:1px;height:18px;background:#c8c8c8;"></div><div class="a" style="left:1199px;top:203px;width:1px;height:18px;background:#c8c8c8;"></div><div class="a" style="left:1261px;top:203px;width:1px;height:18px;background:#c8c8c8;"></div><div class="a" style="left:1323px;top:203px;width:1px;height:18px;background:#c8c8c8;"></div><div class="a" style="left:1385px;top:203px;width:1px;height:18px;background:#c8c8c8;"></div><div class="a" style="left:1447px;top:203px;width:1px;height:18px;background:#c8c8c8;"></div><div class="a" style="left:1509px;top:203px;width:1px;height:18px;background:#c8c8c8;"></div><div class="a" style="left:1571px;top:203px;width:1px;height:18px;background:#c8c8c8;"></div><div class="a" style="left:1633px;top:203px;width:1px;height:18px;background:#c8c8c8;"></div><div class="a" style="left:1695px;top:203px;width:1px;height:18px;background:#c8c8c8;"></div><div class="a" style="left:1757px;top:203px;width:1px;height:18px;background:#c8c8c8;"></div><div class="a" style="left:1819px;top:203px;width:1px;height:18px;background:#c8c8c8;"></div><div class="a" style="left:1881px;top:203px;width:1px;height:18px;background:#c8c8c8;"></div><div class="a" style="left:0;top:0;width:1918px;height:990px;overflow:hidden"><span class="t" id="t76" style="left:8.7421875px;top:286.59px;font-size:13.5px;color:#217346;font-weight:400;">1</span><div class="a" style="left:0px;top:302px;width:25px;height:1px;background:#bdbdbd;"></div><span class="t" id="t77" style="left:8.7421875px;top:306.59px;font-size:13.5px;color:#262626;font-weight:400;">2</span><div class="a" style="left:0px;top:322px;width:25px;height:1px;background:#c8c8c8;"></div><span class="t" id="t78" style="left:8.7421875px;top:326.59px;font-size:13.5px;color:#262626;font-weight:400;">3</span><div class="a" style="left:0px;top:342px;width:25px;height:1px;background:#c8c8c8;"></div><span class="t" id="t79" style="left:8.7421875px;top:346.59px;font-size:13.5px;color:#262626;font-weight:400;">4</span><div class="a" style="left:0px;top:362px;width:25px;height:1px;background:#c8c8c8;"></div><span class="t" id="t80" style="left:8.7421875px;top:366.59px;font-size:13.5px;color:#262626;font-weight:400;">5</span><div class="a" style="left:0px;top:382px;width:25px;height:1px;background:#c8c8c8;"></div><span class="t" id="t81" style="left:8.7421875px;top:386.59px;font-size:13.5px;color:#262626;font-weight:400;">6</span><div class="a" style="left:0px;top:402px;width:25px;height:1px;background:#c8c8c8;"></div><span class="t" id="t82" style="left:8.7421875px;top:406.59px;font-size:13.5px;color:#262626;font-weight:400;">7</span><div class="a" style="left:0px;top:422px;width:25px;height:1px;background:#c8c8c8;"></div><span class="t" id="t83" style="left:8.7421875px;top:426.59px;font-size:13.5px;color:#262626;font-weight:400;">8</span><div class="a" style="left:0px;top:442px;width:25px;height:1px;background:#c8c8c8;"></div><span class="t" id="t84" style="left:8.7421875px;top:446.59px;font-size:13.5px;color:#262626;font-weight:400;">9</span><div class="a" style="left:0px;top:462px;width:25px;height:1px;background:#c8c8c8;"></div><span class="t" id="t85" style="left:4.984375px;top:466.59px;font-size:13.5px;color:#262626;font-weight:400;">10</span><div class="a" style="left:0px;top:482px;width:25px;height:1px;background:#c8c8c8;"></div><span class="t" id="t86" style="left:5.4921875px;top:486.59px;font-size:13.5px;color:#262626;font-weight:400;">11</span><div class="a" style="left:0px;top:502px;width:25px;height:1px;background:#c8c8c8;"></div><span class="t" id="t87" style="left:4.984375px;top:506.59px;font-size:13.5px;color:#262626;font-weight:400;">12</span><div class="a" style="left:0px;top:522px;width:25px;height:1px;background:#c8c8c8;"></div><span class="t" id="t88" style="left:4.984375px;top:526.59px;font-size:13.5px;color:#262626;font-weight:400;">13</span><div class="a" style="left:0px;top:542px;width:25px;height:1px;background:#c8c8c8;"></div><span class="t" id="t89" style="left:4.984375px;top:546.59px;font-size:13.5px;color:#262626;font-weight:400;">14</span><div class="a" style="left:0px;top:562px;width:25px;height:1px;background:#c8c8c8;"></div><span class="t" id="t90" style="left:4.984375px;top:566.59px;font-size:13.5px;color:#262626;font-weight:400;">15</span><div class="a" style="left:0px;top:582px;width:25px;height:1px;background:#c8c8c8;"></div><span class="t" id="t91" style="left:4.984375px;top:586.59px;font-size:13.5px;color:#262626;font-weight:400;">16</span><div class="a" style="left:0px;top:602px;width:25px;height:1px;background:#c8c8c8;"></div><span class="t" id="t92" style="left:4.984375px;top:606.59px;font-size:13.5px;color:#262626;font-weight:400;">17</span><div class="a" style="left:0px;top:622px;width:25px;height:1px;background:#c8c8c8;"></div><span class="t" id="t93" style="left:4.984375px;top:626.59px;font-size:13.5px;color:#262626;font-weight:400;">18</span><div class="a" style="left:0px;top:642px;width:25px;height:1px;background:#c8c8c8;"></div><span class="t" id="t94" style="left:4.984375px;top:646.59px;font-size:13.5px;color:#262626;font-weight:400;">19</span><div class="a" style="left:0px;top:662px;width:25px;height:1px;background:#c8c8c8;"></div><span class="t" id="t95" style="left:4.984375px;top:666.59px;font-size:13.5px;color:#262626;font-weight:400;">20</span><div class="a" style="left:0px;top:682px;width:25px;height:1px;background:#c8c8c8;"></div><span class="t" id="t96" style="left:4.984375px;top:686.59px;font-size:13.5px;color:#262626;font-weight:400;">21</span><div class="a" style="left:0px;top:702px;width:25px;height:1px;background:#c8c8c8;"></div><span class="t" id="t97" style="left:4.984375px;top:706.59px;font-size:13.5px;color:#262626;font-weight:400;">22</span><div class="a" style="left:0px;top:722px;width:25px;height:1px;background:#c8c8c8;"></div><span class="t" id="t98" style="left:4.984375px;top:726.59px;font-size:13.5px;color:#262626;font-weight:400;">23</span><div class="a" style="left:0px;top:742px;width:25px;height:1px;background:#c8c8c8;"></div><span class="t" id="t99" style="left:4.984375px;top:746.59px;font-size:13.5px;color:#262626;font-weight:400;">24</span><div class="a" style="left:0px;top:762px;width:25px;height:1px;background:#c8c8c8;"></div><span class="t" id="t100" style="left:4.984375px;top:766.59px;font-size:13.5px;color:#262626;font-weight:400;">25</span><div class="a" style="left:0px;top:782px;width:25px;height:1px;background:#c8c8c8;"></div><span class="t" id="t101" style="left:4.984375px;top:786.59px;font-size:13.5px;color:#262626;font-weight:400;">26</span><div class="a" style="left:0px;top:802px;width:25px;height:1px;background:#c8c8c8;"></div><span class="t" id="t102" style="left:4.984375px;top:806.59px;font-size:13.5px;color:#262626;font-weight:400;">27</span><div class="a" style="left:0px;top:822px;width:25px;height:1px;background:#c8c8c8;"></div><span class="t" id="t103" style="left:4.984375px;top:826.59px;font-size:13.5px;color:#262626;font-weight:400;">28</span><div class="a" style="left:0px;top:842px;width:25px;height:1px;background:#c8c8c8;"></div><span class="t" id="t104" style="left:4.984375px;top:846.59px;font-size:13.5px;color:#262626;font-weight:400;">29</span><div class="a" style="left:0px;top:862px;width:25px;height:1px;background:#c8c8c8;"></div><span class="t" id="t105" style="left:4.984375px;top:866.59px;font-size:13.5px;color:#262626;font-weight:400;">30</span><div class="a" style="left:0px;top:882px;width:25px;height:1px;background:#c8c8c8;"></div><span class="t" id="t106" style="left:4.984375px;top:886.59px;font-size:13.5px;color:#262626;font-weight:400;">31</span><div class="a" style="left:0px;top:902px;width:25px;height:1px;background:#c8c8c8;"></div><span class="t" id="t107" style="left:4.984375px;top:906.59px;font-size:13.5px;color:#262626;font-weight:400;">32</span><div class="a" style="left:0px;top:922px;width:25px;height:1px;background:#c8c8c8;"></div><span class="t" id="t108" style="left:4.984375px;top:926.59px;font-size:13.5px;color:#262626;font-weight:400;">33</span><div class="a" style="left:0px;top:942px;width:25px;height:1px;background:#c8c8c8;"></div><span class="t" id="t109" style="left:4.984375px;top:946.59px;font-size:13.5px;color:#262626;font-weight:400;">34</span><div class="a" style="left:0px;top:962px;width:25px;height:1px;background:#c8c8c8;"></div><span class="t" id="t110" style="left:4.984375px;top:966.59px;font-size:13.5px;color:#262626;font-weight:400;">35</span><div class="a" style="left:0px;top:982px;width:25px;height:1px;background:#c8c8c8;"></div><span class="t" id="t111" style="left:4.984375px;top:986.59px;font-size:13.5px;color:#262626;font-weight:400;">36</span><div class="a" style="left:0px;top:1002px;width:25px;height:1px;background:#c8c8c8;"></div><div class="a" style="left:24px;top:221px;width:92px;height:2px;background:#217346;"></div><div class="a" style="left:24px;top:221px;width:2px;height:83px;background:#217346;"></div><div class="a" style="left:24px;top:302px;width:40px;height:2px;background:#217346;"></div><div class="a" style="left:114px;top:221px;width:2px;height:32px;background:#217346;"></div><div class="a" style="left:1899px;top:203px;width:19px;height:787px;background:#e6e6e6;"></div><div class="a" style="left:1902px;top:205px;width:15px;height:14px;background:#fff;box-sizing:border-box;border:1px solid #ababab;"></div><svg class="a" style="left:1906px;top:209px;" width="8" height="5" viewBox="0 0 8 5"><path d="M0 4.5L4 0.5l4 4z" fill="#777"/></svg><div class="a" style="left:1902px;top:220px;width:15px;height:319px;background:#fff;box-sizing:border-box;border:1.5px solid #a6a6a6;"></div><div class="a" style="left:1902px;top:540px;width:15px;height:436px;background:#dadada;"></div><div class="a" style="left:1902px;top:976px;width:15px;height:14px;background:#fff;box-sizing:border-box;border:1px solid #ababab;"></div><svg class="a" style="left:1906px;top:981px;" width="8" height="5" viewBox="0 0 8 5"><path d="M0 0.5h8L4 4.5z" fill="#777"/></svg><div class="a" style="left:60px;top:250px;width:598px;height:461px;background:#f4f4f4;"></div><span class="t" id="t112" style="left:85px;top:274.12px;font-size:33px;color:#2e2e2e;font-weight:400;letter-spacing:-0.5px;-webkit-text-stroke:0.8px #f4f4f4;transform:scaleX(0.9208);">Schnelles Analysieren von Daten</span><div class="a" style="left:85px;top:315px;width:548px;height:3px;background:#217346;"></div><span class="t" id="t113" style="left:84px;top:330.98px;font-size:16px;color:#3c3c3c;font-weight:400;transform:scaleX(0.8999);">Auf diese Weise können Sie Daten analysieren und Muster und Trends so schnell</span><span class="t" id="t114" style="left:84px;top:349.48px;font-size:16px;color:#3c3c3c;font-weight:400;transform:scaleX(0.8922);">erkennen:</span><svg class="a" style="left:84.5px;top:375.5px;" width="38" height="38" viewBox="0 0 38 38"><circle cx="19" cy="19" r="19" fill="#217346"/></svg><span class="t" id="t115" style="left:97.65625px;top:384.75px;font-size:21px;color:#fff;font-weight:700;">1</span><span class="t" id="t116" style="left:137px;top:387.75px;font-size:14.5px;color:#3c3c3c;font-weight:400;transform:scaleX(0.9423);">Klicken und ziehen Sie, um alle Zellen auf der rechten Seite auszuwählen, und</span><span class="t" id="t117" style="left:137px;top:406.75px;font-size:14.5px;color:#3c3c3c;font-weight:400;transform:scaleX(0.9413);">klicken Sie dann auf diese Schaltfläche in der unteren rechten Ecke:</span><svg class="a" style="left:560px;top:405px;" width="26" height="26" viewBox="0 0 26 26"><rect x="0.5" y="0.5" width="25" height="25" rx="0.5" fill="#fff" stroke="#217346" stroke-width="1.1"/><path d="M19.5 7V19.5H5.5V17" fill="none" stroke="#8a8a8a" stroke-width="1"/><rect x="11" y="5" width="9" height="2.6" fill="#666"/><path d="M7.2 4H11.8L9.6 8.6H11L4.2 15.8L6.8 10H5Z" fill="#eab76a"/><rect x="10.3" y="10.5" width="3.8" height="1.6" rx="0.5" fill="#d24a24"/><rect x="9.6" y="13.3" width="8.6" height="1.6" rx="0.5" fill="#2f6db5"/><rect x="9.6" y="16.4" width="6.2" height="1.5" rx="0.5" fill="#3a9a6a"/></svg><svg class="a" style="left:84.5px;top:426.5px;" width="38" height="38" viewBox="0 0 38 38"><circle cx="19" cy="19" r="19" fill="#217346"/></svg><span class="t" id="t118" style="left:97.65625px;top:435.75px;font-size:21px;color:#fff;font-weight:700;">2</span><span class="t" id="t119" style="left:137px;top:439.75px;font-size:14.5px;color:#3c3c3c;font-weight:400;transform:scaleX(0.9509);">Klicken Sie auf dem Bedienfeld, das dann angezeigt wird, auf <b>Datenbalken</b>.</span><span class="t" id="t120" style="left:137px;top:458.25px;font-size:14.5px;color:#3c3c3c;font-weight:400;transform:scaleX(0.9606);">Die Zellen unter den Spalten "Okt.", "Nov." und "Dez." erhalten besondere</span><span class="t" id="t121" style="left:137px;top:476.25px;font-size:14.5px;color:#3c3c3c;font-weight:400;transform:scaleX(0.9403);">Datenbalken, die ihre Beträge visualisieren.</span><svg class="a" style="left:84.5px;top:490px;" width="38" height="38" viewBox="0 0 38 38"><circle cx="19" cy="19" r="19" fill="#217346"/></svg><span class="t" id="t122" style="left:97.65625px;top:499.25px;font-size:21px;color:#fff;font-weight:700;">3</span><span class="t" id="t123" style="left:137px;top:502.25px;font-size:14.5px;color:#3c3c3c;font-weight:400;transform:scaleX(0.9406);">Nehmen wir jetzt an, dass Sie die Balken loswerden möchten. Klicken Sie</span><span class="t" id="t124" style="left:137px;top:521.25px;font-size:14.5px;color:#3c3c3c;font-weight:400;transform:scaleX(0.9422);">erneut auf diese Schaltfläche:</span><svg class="a" style="left:328px;top:519px;" width="26" height="26" viewBox="0 0 26 26"><rect x="0.5" y="0.5" width="25" height="25" rx="0.5" fill="#fff" stroke="#217346" stroke-width="1.1"/><path d="M19.5 7V19.5H5.5V17" fill="none" stroke="#8a8a8a" stroke-width="1"/><rect x="11" y="5" width="9" height="2.6" fill="#666"/><path d="M7.2 4H11.8L9.6 8.6H11L4.2 15.8L6.8 10H5Z" fill="#eab76a"/><rect x="10.3" y="10.5" width="3.8" height="1.6" rx="0.5" fill="#d24a24"/><rect x="9.6" y="13.3" width="8.6" height="1.6" rx="0.5" fill="#2f6db5"/><rect x="9.6" y="16.4" width="6.2" height="1.5" rx="0.5" fill="#3a9a6a"/></svg><svg class="a" style="left:84.5px;top:541.5px;" width="38" height="38" viewBox="0 0 38 38"><circle cx="19" cy="19" r="19" fill="#217346"/></svg><span class="t" id="t125" style="left:97.65625px;top:550.75px;font-size:21px;color:#fff;font-weight:700;">4</span><span class="t" id="t126" style="left:137px;top:553.25px;font-size:14.5px;color:#3c3c3c;font-weight:400;transform:scaleX(0.9459);">Klicken Sie auf dem Bedienfeld, das dann angezeigt wird, auf die Schaltfläche</span><span class="t" id="t127" style="left:137px;top:572.25px;font-size:14.5px;color:#3c3c3c;font-weight:400;transform:scaleX(0.9425);"><b>Formatierung löschen</b> auf der rechten Seite.</span><div class="a" style="left:85px;top:612px;width:548px;height:3px;background:#217346;"></div><div class="a" style="left:85px;top:638px;width:326px;height:37px;background:#d9d9d9;box-sizing:border-box;border:1px solid #8cc3a4;"></div><svg class="a" style="left:232px;top:673px;" width="32" height="23" viewBox="0 0 32 23"><path d="M9 1V7.6H1.3L16 21.4L30.7 7.6H22.8V1" fill="#d9d9d9" stroke="#8cc3a4" stroke-width="1.1"/><rect x="9.6" y="0" width="12.6" height="2" fill="#d9d9d9"/></svg><span class="t" id="t128" style="left:95px;top:649.48px;font-size:16px;color:#217346;font-weight:400;transform:scaleX(0.9915);">Tiefer einsteigen und mehr Details erfahren</span><svg class="a" style="left:476px;top:637px;" width="159" height="39" viewBox="0 0 159 39"><path d="M1 1.5H135V13.4H147.4V7.4L156.7 19.3L147.4 31.2V25.5H135V37.5H1Z" fill="#fff" stroke="#217346" stroke-width="1.2"/></svg><span class="t" id="t129" style="left:488px;top:649.48px;font-size:16px;color:#217346;font-weight:400;transform:scaleX(0.9753);">Nächster Schritt</span><div class="a" style="left:66px;top:802px;width:598px;height:188px;background:#f4f4f4;"></div><span class="t" id="t130" style="left:91px;top:824.62px;font-size:33px;color:#2e2e2e;font-weight:400;letter-spacing:-0.5px;-webkit-text-stroke:0.8px #f4f4f4;transform:scaleX(0.8513);">Schnell ein Diagramm erstellen</span><div class="a" style="left:91px;top:867px;width:548px;height:3px;background:#217346;"></div><span class="t" id="t131" style="left:90px;top:883.75px;font-size:14.5px;color:#3c3c3c;font-weight:400;transform:scaleX(0.9535);">Sie können immer die Registerkarte <b>Einfügen</b> verwenden und ein Diagramm erstellen.</span><span class="t" id="t132" style="left:90px;top:902.25px;font-size:14.5px;color:#3c3c3c;font-weight:400;transform:scaleX(0.9541);">Hier zeigen wir Ihnen jedoch eine andere Möglichkeit zum Erstellen eines Diagramms,</span><span class="t" id="t133" style="left:90px;top:920.75px;font-size:14.5px;color:#3c3c3c;font-weight:400;transform:scaleX(0.9523);">mithilfe der Schaltfläche "Schnellanalyse". Diesmal möchten wir außerdem die</span><span class="t" id="t134" style="left:90px;top:939.75px;font-size:14.5px;color:#3c3c3c;font-weight:400;transform:scaleX(0.9680);">Tastenkombination verwenden:</span><svg class="a" style="left:90.5px;top:962px;" width="38" height="38" viewBox="0 0 38 38"><circle cx="19" cy="19" r="19" fill="#217346"/></svg><span class="t" id="t135" style="left:103.65625px;top:971.25px;font-size:21px;color:#fff;font-weight:700;">1</span><span class="t" id="t136" style="left:143px;top:975.75px;font-size:14.5px;color:#3c3c3c;font-weight:400;transform:scaleX(0.9440);">Klicken Sie in den Daten rechts auf eine Zelle, und drücken Sie dann</span><div class="a" style="left:694px;top:362px;width:444px;height:20px;background:#339966;"></div><span class="t" id="t137" style="left:697.5px;top:365.67px;font-size:14px;color:#fff;font-weight:400;transform:scaleX(0.9762);">Abteilung</span><div class="a" style="left:795px;top:364px;width:16px;height:17px;background:#f3f3f3;box-sizing:border-box;border:1px solid #c8c8c8;"></div><svg class="a" style="left:799px;top:370px;" width="8" height="5" viewBox="0 0 8 5"><path d="M0 0h8L4 4.5z" fill="#555"/></svg><span class="t" id="t138" style="left:815.5px;top:365.67px;font-size:14px;color:#fff;font-weight:400;transform:scaleX(0.9844);">Kategorie</span><div class="a" style="left:878px;top:364px;width:16px;height:17px;background:#f3f3f3;box-sizing:border-box;border:1px solid #c8c8c8;"></div><svg class="a" style="left:882px;top:370px;" width="8" height="5" viewBox="0 0 8 5"><path d="M0 0h8L4 4.5z" fill="#555"/></svg><span class="t" id="t139" style="left:898.5px;top:365.67px;font-size:14px;color:#fff;font-weight:400;transform:scaleX(1.0100);">Okt</span><div class="a" style="left:954px;top:364px;width:16px;height:17px;background:#f3f3f3;box-sizing:border-box;border:1px solid #c8c8c8;"></div><svg class="a" style="left:958px;top:370px;" width="8" height="5" viewBox="0 0 8 5"><path d="M0 0h8L4 4.5z" fill="#555"/></svg><span class="t" id="t140" style="left:974.5px;top:365.67px;font-size:14px;color:#fff;font-weight:400;transform:scaleX(0.9636);">Nov</span><div class="a" style="left:1037px;top:364px;width:16px;height:17px;background:#f3f3f3;box-sizing:border-box;border:1px solid #c8c8c8;"></div><svg class="a" style="left:1041px;top:370px;" width="8" height="5" viewBox="0 0 8 5"><path d="M0 0h8L4 4.5z" fill="#555"/></svg><span class="t" id="t141" style="left:1057.5px;top:365.67px;font-size:14px;color:#fff;font-weight:400;transform:scaleX(0.8833);">Dez</span><div class="a" style="left:1120px;top:364px;width:16px;height:17px;background:#f3f3f3;box-sizing:border-box;border:1px solid #c8c8c8;"></div><svg class="a" style="left:1124px;top:370px;" width="8" height="5" viewBox="0 0 8 5"><path d="M0 0h8L4 4.5z" fill="#555"/></svg><div class="a" style="left:694px;top:382px;width:444px;height:20px;background:#f0f0f0;"></div><span class="t" id="t142" style="left:697.5px;top:386.17px;font-size:14px;color:#000;font-weight:400;transform:scaleX(0.9637);">Obst und Gemüse</span><span class="t" id="t143" style="left:815px;top:386.17px;font-size:14px;color:#000;font-weight:400;transform:scaleX(0.9637);">Gemüse</span><span class="t" id="t144" style="left:919.95px;top:386.17px;font-size:14px;color:#000;font-weight:400;transform:scaleX(0.9000);">30.000 €</span><span class="t" id="t145" style="left:1002.95px;top:386.17px;font-size:14px;color:#000;font-weight:400;transform:scaleX(0.9000);">80.000 €</span><span class="t" id="t146" style="left:1085.95px;top:386.17px;font-size:14px;color:#000;font-weight:400;transform:scaleX(0.9000);">30.000 €</span><span class="t" id="t147" style="left:697.5px;top:406.17px;font-size:14px;color:#000;font-weight:400;transform:scaleX(0.9637);">Obst und Gemüse</span><span class="t" id="t148" style="left:815px;top:406.17px;font-size:14px;color:#000;font-weight:400;transform:scaleX(0.9635);">Obst</span><span class="t" id="t149" style="left:919.95px;top:406.17px;font-size:14px;color:#000;font-weight:400;transform:scaleX(0.9000);">10.000 €</span><span class="t" id="t150" style="left:1002.95px;top:406.17px;font-size:14px;color:#000;font-weight:400;transform:scaleX(0.9000);">30.000 €</span><span class="t" id="t151" style="left:1085.95px;top:406.17px;font-size:14px;color:#000;font-weight:400;transform:scaleX(0.9000);">40.000 €</span><div class="a" style="left:694px;top:422px;width:444px;height:20px;background:#f0f0f0;"></div><span class="t" id="t152" style="left:697.5px;top:426.17px;font-size:14px;color:#000;font-weight:400;transform:scaleX(0.9529);">Backwaren</span><span class="t" id="t153" style="left:815px;top:426.17px;font-size:14px;color:#000;font-weight:400;transform:scaleX(1.0009);">Brote</span><span class="t" id="t154" style="left:919.95px;top:426.17px;font-size:14px;color:#000;font-weight:400;transform:scaleX(0.9000);">30.000 €</span><span class="t" id="t155" style="left:1002.95px;top:426.17px;font-size:14px;color:#000;font-weight:400;transform:scaleX(0.9000);">15.000 €</span><span class="t" id="t156" style="left:1085.95px;top:426.17px;font-size:14px;color:#000;font-weight:400;transform:scaleX(0.9000);">20.000 €</span><span class="t" id="t157" style="left:697.5px;top:446.17px;font-size:14px;color:#000;font-weight:400;transform:scaleX(0.9529);">Backwaren</span><span class="t" id="t158" style="left:815px;top:446.17px;font-size:14px;color:#000;font-weight:400;transform:scaleX(0.9595);">Desserts</span><span class="t" id="t159" style="left:919.95px;top:446.17px;font-size:14px;color:#000;font-weight:400;transform:scaleX(0.9000);">25.000 €</span><span class="t" id="t160" style="left:1002.95px;top:446.17px;font-size:14px;color:#000;font-weight:400;transform:scaleX(0.9000);">80.000 €</span><span class="t" id="t161" style="left:1078.9328125px;top:446.17px;font-size:14px;color:#000;font-weight:400;transform:scaleX(0.9000);">120.000 €</span><div class="a" style="left:694px;top:462px;width:444px;height:20px;background:#f0f0f0;"></div><span class="t" id="t162" style="left:697.5px;top:466.17px;font-size:14px;color:#000;font-weight:400;transform:scaleX(0.9920);">Feinkost</span><span class="t" id="t163" style="left:815px;top:466.17px;font-size:14px;color:#000;font-weight:400;transform:scaleX(0.9555);">Sandwich</span><span class="t" id="t164" style="left:919.95px;top:466.17px;font-size:14px;color:#000;font-weight:400;transform:scaleX(0.9000);">80.000 €</span><span class="t" id="t165" style="left:1002.95px;top:466.17px;font-size:14px;color:#000;font-weight:400;transform:scaleX(0.9000);">40.000 €</span><span class="t" id="t166" style="left:1085.95px;top:466.17px;font-size:14px;color:#000;font-weight:400;transform:scaleX(0.9000);">20.000 €</span><span class="t" id="t167" style="left:697.5px;top:486.17px;font-size:14px;color:#000;font-weight:400;transform:scaleX(0.9920);">Feinkost</span><span class="t" id="t168" style="left:815px;top:486.17px;font-size:14px;color:#000;font-weight:400;transform:scaleX(0.9445);">Salate</span><span class="t" id="t169" style="left:919.95px;top:486.17px;font-size:14px;color:#000;font-weight:400;transform:scaleX(0.9000);">90.000 €</span><span class="t" id="t170" style="left:1002.95px;top:486.17px;font-size:14px;color:#000;font-weight:400;transform:scaleX(0.9000);">35.000 €</span><span class="t" id="t171" style="left:1085.95px;top:486.17px;font-size:14px;color:#000;font-weight:400;transform:scaleX(0.9000);">25.000 €</span><div class="a" style="left:694px;top:502px;width:444px;height:20px;background:#f0f0f0;"></div><span class="t" id="t172" style="left:697.5px;top:506.17px;font-size:14px;color:#000;font-weight:400;transform:scaleX(0.9820);">Fleischwaren</span><span class="t" id="t173" style="left:815px;top:506.17px;font-size:14px;color:#000;font-weight:400;transform:scaleX(0.9929);">Rindfleisch</span><span class="t" id="t174" style="left:919.95px;top:506.17px;font-size:14px;color:#000;font-weight:400;transform:scaleX(0.9000);">90.000 €</span><span class="t" id="t175" style="left:996.875px;top:506.17px;font-size:14px;color:#000;font-weight:400;transform:scaleX(0.9000);">110.000 €</span><span class="t" id="t176" style="left:1078.9328125px;top:506.17px;font-size:14px;color:#000;font-weight:400;transform:scaleX(0.9000);">200.000 €</span><span class="t" id="t177" style="left:697.5px;top:526.17px;font-size:14px;color:#000;font-weight:400;transform:scaleX(0.9820);">Fleischwaren</span><span class="t" id="t178" style="left:815px;top:526.17px;font-size:14px;color:#000;font-weight:400;transform:scaleX(0.9711);">Huhn</span><span class="t" id="t179" style="left:919.95px;top:526.17px;font-size:14px;color:#000;font-weight:400;transform:scaleX(0.9000);">75.000 €</span><span class="t" id="t180" style="left:1002.95px;top:526.17px;font-size:14px;color:#000;font-weight:400;transform:scaleX(0.9000);">82.000 €</span><span class="t" id="t181" style="left:1078.9328125px;top:526.17px;font-size:14px;color:#000;font-weight:400;transform:scaleX(0.9000);">150.000 €</span><div class="a" style="left:1134px;top:536px;width:3px;height:3px;background:#3f5fa8;"></div><div class="a" style="left:694px;top:942px;width:444px;height:20px;background:#339966;"></div><span class="t" id="t182" style="left:697.5px;top:945.67px;font-size:14px;color:#fff;font-weight:400;transform:scaleX(0.9762);">Abteilung</span><div class="a" style="left:795px;top:944px;width:16px;height:17px;background:#f3f3f3;box-sizing:border-box;border:1px solid #c8c8c8;"></div><svg class="a" style="left:799px;top:950px;" width="8" height="5" viewBox="0 0 8 5"><path d="M0 0h8L4 4.5z" fill="#555"/></svg><span class="t" id="t183" style="left:815.5px;top:945.67px;font-size:14px;color:#fff;font-weight:400;transform:scaleX(0.9844);">Kategorie</span><div class="a" style="left:878px;top:944px;width:16px;height:17px;background:#f3f3f3;box-sizing:border-box;border:1px solid #c8c8c8;"></div><svg class="a" style="left:882px;top:950px;" width="8" height="5" viewBox="0 0 8 5"><path d="M0 0h8L4 4.5z" fill="#555"/></svg><span class="t" id="t184" style="left:898.5px;top:945.67px;font-size:14px;color:#fff;font-weight:400;transform:scaleX(1.0100);">Okt</span><div class="a" style="left:954px;top:944px;width:16px;height:17px;background:#f3f3f3;box-sizing:border-box;border:1px solid #c8c8c8;"></div><svg class="a" style="left:958px;top:950px;" width="8" height="5" viewBox="0 0 8 5"><path d="M0 0h8L4 4.5z" fill="#555"/></svg><span class="t" id="t185" style="left:974.5px;top:945.67px;font-size:14px;color:#fff;font-weight:400;transform:scaleX(0.9636);">Nov</span><div class="a" style="left:1037px;top:944px;width:16px;height:17px;background:#f3f3f3;box-sizing:border-box;border:1px solid #c8c8c8;"></div><svg class="a" style="left:1041px;top:950px;" width="8" height="5" viewBox="0 0 8 5"><path d="M0 0h8L4 4.5z" fill="#555"/></svg><span class="t" id="t186" style="left:1057.5px;top:945.67px;font-size:14px;color:#fff;font-weight:400;transform:scaleX(0.8833);">Dez</span><div class="a" style="left:1120px;top:944px;width:16px;height:17px;background:#f3f3f3;box-sizing:border-box;border:1px solid #c8c8c8;"></div><svg class="a" style="left:1124px;top:950px;" width="8" height="5" viewBox="0 0 8 5"><path d="M0 0h8L4 4.5z" fill="#555"/></svg><div class="a" style="left:694px;top:962px;width:444px;height:20px;background:#f0f0f0;"></div><span class="t" id="t187" style="left:697.5px;top:966.17px;font-size:14px;color:#000;font-weight:400;transform:scaleX(0.9529);">Backwaren</span><span class="t" id="t188" style="left:815px;top:966.17px;font-size:14px;color:#000;font-weight:400;transform:scaleX(1.0009);">Brote</span><span class="t" id="t189" style="left:919.95px;top:966.17px;font-size:14px;color:#000;font-weight:400;transform:scaleX(0.9000);">30.000 €</span><span class="t" id="t190" style="left:1002.95px;top:966.17px;font-size:14px;color:#000;font-weight:400;transform:scaleX(0.9000);">15.000 €</span><span class="t" id="t191" style="left:1085.95px;top:966.17px;font-size:14px;color:#000;font-weight:400;transform:scaleX(0.9000);">20.000 €</span><span class="t" id="t192" style="left:697.5px;top:986.17px;font-size:14px;color:#000;font-weight:400;transform:scaleX(0.9529);">Backwaren</span><span class="t" id="t193" style="left:815px;top:986.17px;font-size:14px;color:#000;font-weight:400;transform:scaleX(0.9595);">Desserts</span><span class="t" id="t194" style="left:919.95px;top:986.17px;font-size:14px;color:#000;font-weight:400;transform:scaleX(0.9000);">25.000 €</span><span class="t" id="t195" style="left:1002.95px;top:986.17px;font-size:14px;color:#000;font-weight:400;transform:scaleX(0.9000);">80.000 €</span><span class="t" id="t196" style="left:1078.9328125px;top:986.17px;font-size:14px;color:#000;font-weight:400;transform:scaleX(0.9000);">120.000 €</span><svg class="a" style="left:770px;top:566px;" width="36" height="17" viewBox="0 0 36 17"><g fill="none" stroke="#f0a878" stroke-width="2.5" stroke-linejoin="round"><path d="M2.3 3.3Q9 0.8 15.6 3.2L14.5 10Q13 14.7 8.8 14.8Q4.2 14.7 3.2 10Z"/><path d="M20.4 3.2Q27 0.8 33.7 3.3L32.8 10Q31.8 14.7 27.2 14.8Q23 14.7 21.5 10Z"/><path d="M15.5 3.6Q18 2.6 20.5 3.6"/></g></svg><span class="t" id="t197" style="left:812px;top:565.25px;font-size:14.5px;color:#f4b183;font-weight:700;transform:scaleX(1.0124);">WISSENSWERTES</span><span class="t" id="t198" style="left:812px;top:584.67px;font-size:14px;color:#3a3a3a;font-weight:400;transform:scaleX(0.9446);">Wenn Sie Zellen auswählen, wird diese Schaltfläche angezeigt:</span><span class="t" id="t199" style="left:812px;top:602.67px;font-size:14px;color:#3a3a3a;font-weight:400;transform:scaleX(0.9222);">Dies ist die Schaltfläche <b>Schnellanalyse</b>. Der Name passt,</span><span class="t" id="t200" style="left:812px;top:620.17px;font-size:14px;color:#3a3a3a;font-weight:400;transform:scaleX(0.9406);">finden Sie nicht? Wenn Sie jemals eine Frage zu Daten haben,</span><span class="t" id="t201" style="left:812px;top:638.17px;font-size:14px;color:#3a3a3a;font-weight:400;transform:scaleX(0.9367);">klicken Sie auf diese Schaltfläche, und finden Sie heraus, ob Sie</span><span class="t" id="t202" style="left:812px;top:656.17px;font-size:14px;color:#3a3a3a;font-weight:400;transform:scaleX(0.9955);">darauf Antworten erhalten.</span><svg class="a" style="left:1193px;top:568px;" width="26" height="26" viewBox="0 0 26 26"><rect x="0.5" y="0.5" width="25" height="25" rx="0.5" fill="#fff" stroke="#217346" stroke-width="1.1"/><path d="M19.5 7V19.5H5.5V17" fill="none" stroke="#8a8a8a" stroke-width="1"/><rect x="11" y="5" width="9" height="2.6" fill="#666"/><path d="M7.2 4H11.8L9.6 8.6H11L4.2 15.8L6.8 10H5Z" fill="#eab76a"/><rect x="10.3" y="10.5" width="3.8" height="1.6" rx="0.5" fill="#d24a24"/><rect x="9.6" y="13.3" width="8.6" height="1.6" rx="0.5" fill="#2f6db5"/><rect x="9.6" y="16.4" width="6.2" height="1.5" rx="0.5" fill="#3a9a6a"/></svg></div><div class="a" style="left:0px;top:990px;width:1918px;height:28px;background:#e6e6e6;"></div><div class="a" style="left:0px;top:990px;width:1918px;height:1px;background:#c6c6c6;"></div><svg class="a" style="left:27px;top:998px;" width="6" height="10" viewBox="0 0 6 10"><path d="M5.5 0.5L0.5 5l5 4.5z" fill="#c0c0c0"/></svg><svg class="a" style="left:55px;top:998px;" width="6" height="10" viewBox="0 0 6 10"><path d="M0.5 0.5L5.5 5l-5 4.5z" fill="#c0c0c0"/></svg><div class="a" style="left:100px;top:995px;width:1px;height:19px;background:#a6a6a6;"></div><div class="a" style="left:153px;top:995px;width:1px;height:19px;background:#a6a6a6;"></div><div class="a" style="left:248px;top:995px;width:1px;height:19px;background:#a6a6a6;"></div><div class="a" style="left:346px;top:995px;width:1px;height:19px;background:#a6a6a6;"></div><div class="a" style="left:423px;top:995px;width:1px;height:19px;background:#a6a6a6;"></div><div class="a" style="left:551px;top:995px;width:1px;height:19px;background:#a6a6a6;"></div><div class="a" style="left:718px;top:995px;width:1px;height:19px;background:#a6a6a6;"></div><div class="a" style="left:810px;top:995px;width:1px;height:19px;background:#a6a6a6;"></div><div class="a" style="left:1170px;top:995px;width:1px;height:19px;background:#a6a6a6;"></div><div class="a" style="left:1288px;top:995px;width:1px;height:19px;background:#a6a6a6;"></div><div class="a" style="left:1452px;top:995px;width:1px;height:19px;background:#a6a6a6;"></div><div class="a" style="left:948px;top:990px;width:112px;height:25px;background:#fff;"></div><div class="a" style="left:948px;top:1013px;width:112px;height:2px;background:#217346;"></div><span class="t" id="t203" style="left:112.8px;top:996.59px;font-size:13.5px;color:#444;font-weight:400;transform:scaleX(0.9539);">Start</span><span class="t" id="t204" style="left:167.5px;top:996.59px;font-size:13.5px;color:#444;font-weight:400;transform:scaleX(0.9661);">1. Addieren</span><span class="t" id="t205" style="left:264px;top:996.59px;font-size:13.5px;color:#444;font-weight:400;transform:scaleX(0.9411);">2. Ausfüllen</span><span class="t" id="t206" style="left:360px;top:996.59px;font-size:13.5px;color:#444;font-weight:400;transform:scaleX(0.9531);">3. Teilen</span><span class="t" id="t207" style="left:438px;top:996.59px;font-size:13.5px;color:#444;font-weight:400;transform:scaleX(0.9622);">4. Transponieren</span><span class="t" id="t208" style="left:568px;top:996.59px;font-size:13.5px;color:#444;font-weight:400;transform:scaleX(0.9576);">5. Sortieren und Filtern</span><span class="t" id="t209" style="left:731.8px;top:996.59px;font-size:13.5px;color:#444;font-weight:400;transform:scaleX(0.9652);">6. Tabellen</span><span class="t" id="t210" style="left:826px;top:996.59px;font-size:13.5px;color:#444;font-weight:400;transform:scaleX(0.9717);">7. Dropdownlisten</span><span class="t" id="t211" style="left:1072.7px;top:996.59px;font-size:13.5px;color:#444;font-weight:400;transform:scaleX(0.9554);">9. Diagramme</span><span class="t" id="t212" style="left:1185.7px;top:996.59px;font-size:13.5px;color:#444;font-weight:400;transform:scaleX(0.9414);">10. PivotTables</span><span class="t" id="t213" style="left:1305px;top:996.59px;font-size:13.5px;color:#444;font-weight:400;transform:scaleX(0.9783);">Weitere Informationen</span><span class="t" id="t214" style="left:959.7px;top:996.59px;font-size:13.5px;color:#217346;font-weight:700;transform:scaleX(0.9534);">8. Analysieren</span><svg class="a" style="left:1485px;top:995px;" width="17" height="17" viewBox="0 0 17 17"><circle cx="8.5" cy="8.5" r="7.5" fill="none" stroke="#777" stroke-width="1.3"/><path d="M8.5 4.5v8M4.5 8.5h8" stroke="#777" stroke-width="1.5"/></svg><div class="a" style="left:1615px;top:999px;width:2px;height:2px;background:#9a9a9a;"></div><div class="a" style="left:1615px;top:1003px;width:2px;height:2px;background:#9a9a9a;"></div><div class="a" style="left:1615px;top:1007px;width:2px;height:2px;background:#9a9a9a;"></div><div class="a" style="left:1632px;top:997px;width:15px;height:15px;background:#fff;box-sizing:border-box;border:1px solid #ababab;"></div><svg class="a" style="left:1637px;top:1001px;" width="5" height="8" viewBox="0 0 5 8"><path d="M4.5 0L0.5 4l4 4z" fill="#666"/></svg><div class="a" style="left:1646px;top:997px;width:225px;height:15px;background:#fff;box-sizing:border-box;border:1.5px solid #a6a6a6;"></div><div class="a" style="left:1871px;top:997px;width:14px;height:15px;background:#dadada;"></div><div class="a" style="left:1886px;top:997px;width:15px;height:15px;background:#fff;box-sizing:border-box;border:1px solid #ababab;"></div><svg class="a" style="left:1892px;top:1001px;" width="5" height="8" viewBox="0 0 5 8"><path d="M0.5 0l4 4-4 4z" fill="#666"/></svg><div class="a" style="left:0px;top:1018px;width:1918px;height:1px;background:#c6c6c6;"></div><div class="a" style="left:0px;top:1019px;width:1918px;height:21px;background:#f3f3f3;"></div><span class="t" id="t215" style="left:7px;top:1022.86px;font-size:12px;color:#444;font-weight:400;transform:scaleX(0.9248);">Bereit</span><div class="a" style="left:1631px;top:1019px;width:38px;height:21px;background:#d4d4d4;"></div><svg class="a" style="left:1643px;top:1022px;" width="14" height="14" viewBox="0 0 14 14"><path d="M0.5 0.5h13v13h-13zM0.5 5h13M0.5 9h13M5 0.5v13M9 0.5v13" fill="none" stroke="#666" stroke-width="1"/></svg><svg class="a" style="left:1681px;top:1022px;" width="14" height="14" viewBox="0 0 14 14"><rect x="0.5" y="0.5" width="13" height="13" fill="none" stroke="#666"/><rect x="3" y="3" width="8" height="8" fill="none" stroke="#666"/><path d="M4.5 5h5M4.5 7h5M4.5 9h5" stroke="#666" stroke-width="0.8"/></svg><svg class="a" style="left:1718px;top:1022px;" width="14" height="14" viewBox="0 0 14 14"><path d="M0.5 0.5h13v13h-13zM0.5 7h5V0.5M8.5 0.5V7" fill="none" stroke="#666" stroke-width="1"/></svg><div class="a" style="left:1750px;top:1028px;width:6px;height:2px;background:#555;"></div><div class="a" style="left:1760px;top:1028px;width:100px;height:1px;background:#a0a0a0;"></div><div class="a" style="left:1808px;top:1022px;width:5px;height:13px;background:#666;"></div><div class="a" style="left:1863px;top:1028px;width:8px;height:2px;background:#555;"></div><div class="a" style="left:1866px;top:1025px;width:2px;height:8px;background:#555;"></div><span class="t" id="t216" style="left:1882.5px;top:1023.86px;font-size:12px;color:#444;font-weight:400;transform:scaleX(0.8375);">100 %</span>
</body></html>
